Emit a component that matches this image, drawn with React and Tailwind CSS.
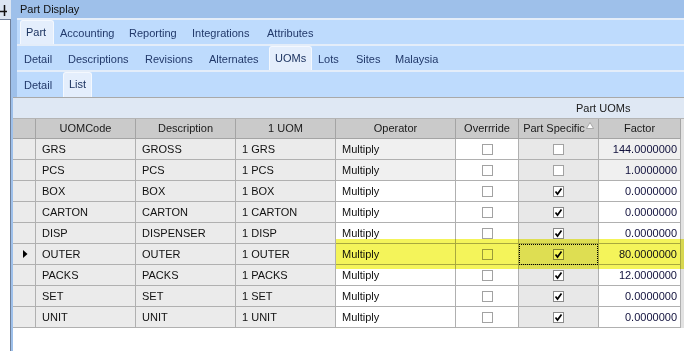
import React from 'react';

const FONT = "font-['Liberation_Sans',Arial,sans-serif]";

const tabRows = [
  {
    h: 'h-[24px]',
    tabs: [
      { label: 'Part', w: 'w-[34px]', active: true },
      { label: 'Accounting', w: 'w-[69px]' },
      { label: 'Reporting', w: 'w-[63px]' },
      { label: 'Integrations', w: 'w-[75px]' },
      { label: 'Attributes', w: 'w-[70px]' },
    ],
    start: 'pl-[3px]',
  },
  {
    h: 'h-[24px]',
    tabs: [
      { label: 'Detail', w: 'w-[44px]' },
      { label: 'Descriptions', w: 'w-[77px]' },
      { label: 'Revisions', w: 'w-[64px]' },
      { label: 'Alternates', w: 'w-[66px]' },
      { label: 'UOMs', w: 'w-[43px]', active: true },
      { label: 'Lots', w: 'w-[38px]' },
      { label: 'Sites', w: 'w-[39px]' },
      { label: 'Malaysia', w: 'w-[60px]' },
    ],
    start: 'pl-[1px]',
  },
  {
    h: 'h-[25px]',
    tabs: [
      { label: 'Detail', w: 'w-[45px]' },
      { label: 'List', w: 'w-[29px]', active: true },
    ],
    start: 'pl-[1px]',
  },
];

const cols = [
  { key: 'ind', w: 'w-[23px]' },
  { key: 'code', label: 'UOMCode', w: 'w-[100px]' },
  { key: 'desc', label: 'Description', w: 'w-[100px]' },
  { key: 'one', label: '1 UOM', w: 'w-[100px]' },
  { key: 'op', label: 'Operator', w: 'w-[120px]' },
  { key: 'ovr', label: 'Overrride', w: 'w-[63px]' },
  { key: 'ps', label: 'Part Specific', w: 'w-[80px]', sorted: true },
  { key: 'factor', label: 'Factor', w: 'w-[82px]' },
];

const rows = [
  { code: 'GRS', desc: 'GROSS', factor: '144.0000000', ps: false, locked: true },
  { code: 'PCS', desc: 'PCS', factor: '1.0000000', ps: false, locked: true },
  { code: 'BOX', desc: 'BOX', factor: '0.0000000', ps: true },
  { code: 'CARTON', desc: 'CARTON', factor: '0.0000000', ps: true },
  { code: 'DISP', desc: 'DISPENSER', factor: '0.0000000', ps: true },
  { code: 'OUTER', desc: 'OUTER', factor: '80.0000000', ps: true, current: true },
  { code: 'PACKS', desc: 'PACKS', factor: '12.0000000', ps: true },
  { code: 'SET', desc: 'SET', factor: '0.0000000', ps: true },
  { code: 'UNIT', desc: 'UNIT', factor: '0.0000000', ps: true },
];

function CheckBox({ checked }) {
  return (
    <div className={`w-[11px] h-[11px] bg-white border ${checked ? 'border-[#8a8a8a]' : 'border-[#a2a2a2]'} flex items-center justify-center`}>
      {checked && (
        <svg width="9" height="9" viewBox="0 0 9 9">
          <path d="M1.5 4.5 L3.5 7 L7.5 1.5" fill="none" stroke="#000" strokeWidth="1.7" />
        </svg>
      )}
    </div>
  );
}

function Tab({ label, w, active }) {
  if (active) {
    return (
      <div className={`${w} h-full flex items-start pt-[3px] pl-[5px] bg-[#e4eefc] border border-b-0 border-[#f4f8fe] rounded-t-[3px] text-[#1d3461]`}>
        {label}
      </div>
    );
  }
  return (
    <div className={`${w} h-full flex items-center pl-[6px] pt-[2px] text-[#22396a]`}>{label}</div>
  );
}

export default function App() {
  const cell = 'border-r border-b border-[#b0b0b0] h-full flex items-center';
  return (
    <div className={`w-[684px] h-[351px] flex overflow-hidden bg-white text-[11px] ${FONT}`}>
      {/* docked side panel */}
      <div className="w-[11px] flex flex-col">
        <div className="h-[19px] bg-[#dce6f3] relative">
          <svg width="8" height="12" viewBox="0 0 8 12" className="absolute left-0 top-[4px]">
            <path d="M0 7.5 H7 M4.5 1 V12" stroke="#111" strokeWidth="1.5" fill="none" />
          </svg>
        </div>
        <div className="flex-1 bg-white border-t border-r border-[#6f7f99]" />
      </div>

      {/* main window */}
      <div className="flex-1 flex flex-col bg-[#9ec0ea]">
        <div className="h-[18px] flex items-center pl-[9px] text-[#111]">Part Display</div>
        <div className="ml-[6px] flex flex-col bg-[#e4edf9] pt-[2px] gap-[2px]">
          {tabRows.map((r, i) => (
            <div key={i} className={`${r.h} flex bg-[#bedbfd] ${r.start}`}>
              {r.tabs.map((t) => (
                <Tab key={t.label} {...t} />
              ))}
            </div>
          ))}
        </div>

        <div className="ml-[2px] flex-1 flex flex-col bg-white border-t border-[#a9a9a9]">
          <div className="h-[21px] bg-[#dfe8f4] border-b border-[#b4b4b4] flex items-center pl-[563px] text-[#1a1a1a]">
            Part UOMs
          </div>

          <div className="relative">
            {/* header */}
            <div className="flex h-[20px] bg-[#cacaca]">
              {cols.map((c) => (
                <div key={c.key} className={`${c.w} border-r border-b border-[#a4a4a4] h-full flex items-center justify-center text-[#1a1a1a]`}>
                  {c.label}
                  {c.sorted && (
                    <svg width="8" height="7" viewBox="0 0 8 7" className="ml-[1px] -mt-[6px]">
                      <path d="M4 0.5 L7.5 6.5 H0.5 Z" fill="#fff" stroke="#9a9a9a" strokeWidth="0.8" />
                    </svg>
                  )}
                </div>
              ))}
              <div className="flex-1 bg-[#e2e2e2]" />
            </div>

            {/* rows */}
            {rows.map((r) => (
              <div key={r.code} className="flex h-[21px] text-[#111]">
                <div className={`w-[23px] ${cell} bg-[#ebebeb] pl-[10px]`}>
                  {r.current && (
                    <svg width="5" height="8" viewBox="0 0 5 8">
                      <path d="M0 0 L4.5 4 L0 8 Z" fill="#000" />
                    </svg>
                  )}
                </div>
                <div className={`w-[100px] ${cell} bg-[#ebebeb] pl-[6px]`}>{r.code}</div>
                <div className={`w-[100px] ${cell} bg-[#ebebeb] pl-[6px]`}>{r.desc}</div>
                <div className={`w-[100px] ${cell} bg-[#ebebeb] pl-[6px]`}>1 {r.code}</div>
                <div className={`w-[120px] ${cell} ${r.locked ? 'bg-[#f0f0f0]' : 'bg-white'} pl-[6px]`}>Multiply</div>
                <div className={`w-[63px] ${cell} bg-white justify-center`}>
                  <CheckBox checked={false} />
                </div>
                <div className={`w-[80px] ${cell} bg-[#e8e8e8] justify-center relative`}>
                  {r.current && <div className="absolute inset-x-0 top-0 bottom-[-1px] border border-dotted border-black" />}
                  <CheckBox checked={r.ps} />
                </div>
                <div className={`w-[82px] ${cell} ${r.locked ? 'bg-[#f0f0f0]' : 'bg-white'} justify-end pr-[3px] text-[#10103c]`}>
                  {r.factor}
                </div>
                <div className="flex-1 bg-[#e2e2e2]" />
              </div>
            ))}

            {/* highlighter mark over the OUTER row */}
            <div className="absolute left-[323px] right-0 top-[120px] h-[30px] bg-[#f4f45a] mix-blend-multiply" />
          </div>
          <div className="flex-1 bg-white" />
        </div>
      </div>
    </div>
  );
}
